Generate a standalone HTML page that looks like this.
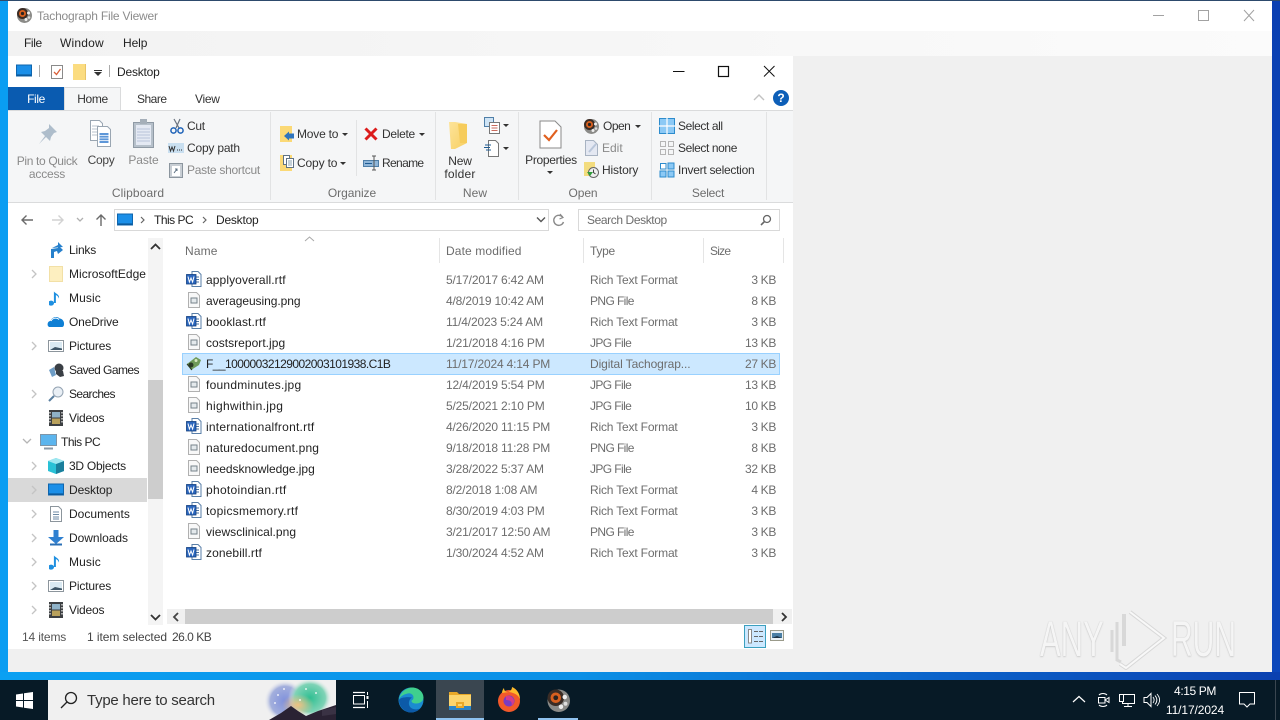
<!DOCTYPE html>
<html><head><meta charset="utf-8"><style>
html,body{margin:0;padding:0;width:1280px;height:720px;overflow:hidden;background:#f0f0f0}
body{position:relative;font-family:"Liberation Sans",sans-serif;font-size:12px;color:#222}
div,svg{position:absolute}
.t{position:absolute;white-space:nowrap;line-height:16px;height:16px;font-size:12px}
.g{color:#6d6d6d}.d{color:#8a8a8a}.c{text-align:center}
.dt{letter-spacing:-.17px}
.rt{letter-spacing:-.18px}
.pf{letter-spacing:-.6px}
.sz{letter-spacing:-.35px;text-align:right;left:700px;width:76px}
.arrow{width:0;height:0;border-left:3px solid transparent;border-right:3px solid transparent;border-top:3px solid #333}
.wm{position:absolute;height:50px;line-height:50px;font-size:50px;color:#f5f5f5;text-shadow:0 0 1px #b4b4b4,0 1px 2px #d0d0d0;transform-origin:0 0;white-space:nowrap}
</style></head><body>
<svg width="0" height="0" style="left:0;top:0"><defs>
<linearGradient id="fg" x1="0" y1="0" x2="1" y2="1"><stop offset="0" stop-color="#fde49a"/><stop offset="1" stop-color="#f7cf62"/></linearGradient>
<radialGradient id="gb"><stop offset="0" stop-color="#7f90dc"/><stop offset=".7" stop-color="#a3afdc"/><stop offset="1" stop-color="#f0f0f0" stop-opacity="0"/></radialGradient>
<radialGradient id="gg"><stop offset="0" stop-color="#2fbf92"/><stop offset=".7" stop-color="#7fd3b6"/><stop offset="1" stop-color="#f0f0f0" stop-opacity="0"/></radialGradient>
<radialGradient id="go"><stop offset="0" stop-color="#f0c080"/><stop offset="1" stop-color="#f0c080" stop-opacity="0"/></radialGradient>
<symbol id="word" viewBox="0 0 16 16"><path d="M6 .5h6l3 3v12H6z" fill="#fff" stroke="#5a7fa8"/><path d="M10 6h3M10 8.500h3M10 11h3" stroke="#4a72a0"/><rect x=".5" y="3.500" width="9.500" height="9.500" fill="#2b66bd" stroke="#123f80" stroke-width=".8"/><path d="M2 5.500l1.400 5.500 1.600-4 1.600 4L8 5.500" stroke="#fff" fill="none" stroke-width="1"/></symbol>
<symbol id="img" viewBox="0 0 16 16"><path d="M2.500 .5h8l3 3v12h-11z" fill="#f8f8f8" stroke="#b0b0b0"/><rect x="5" y="6" width="6" height="5" fill="#e4e9ec" stroke="#76828a"/></symbol>
<symbol id="mon" viewBox="0 0 16 14"><rect x=".5" y="1" width="15" height="11" fill="#1b8fe8" stroke="#0f65ad"/><path d="M1 11h14" stroke="#0a4f8a"/></symbol>
<symbol id="note" viewBox="0 0 16 16"><path d="M5 13a3 2.500 0 1 1-.1-.500V1.500c2 2.500 6 3 5 7-.6-2.500-3-3.500-3-3.500v8z" fill="#1e8fe0"/></symbol>
<symbol id="pic" viewBox="0 0 16 14"><rect x=".5" y="1.500" width="15" height="11" fill="#fff" stroke="#8c959c"/><rect x="2" y="3" width="12" height="8" fill="#d9e9f2"/><path d="M2 11l5-3 7 1.500V11z" fill="#3e5566"/></symbol>
<symbol id="film" viewBox="0 0 14 16"><rect width="14" height="16" fill="#3c3f42"/><rect x="3" y="2" width="8" height="5.500" fill="#8fb2c8"/><rect x="3" y="8.500" width="8" height="5.500" fill="#b9a15c"/><path d="M1 2v12M13 2v12" stroke="#ddd" stroke-dasharray="1.500 1.500" stroke-width="1.400"/></symbol>
<symbol id="chev" viewBox="0 0 6 10"><path d="M1 1l4 4-4 4" fill="none" stroke="#c4c4c4" stroke-width="1.300"/></symbol>
<symbol id="reel" viewBox="0 0 16 16"><circle cx="8.500" cy="8.500" r="7.500" fill="#8b8b88"/><circle cx="6.500" cy="6.500" r="5.500" fill="#3a2c25"/><circle cx="6.500" cy="6.500" r="3.500" fill="#d8601f"/><circle cx="6.500" cy="6.500" r="1.600" fill="#2a2320"/><circle cx="12.500" cy="6" r="1.500" fill="#eee"/><circle cx="10" cy="12.500" r="1.500" fill="#eee"/><circle cx="13" cy="10.500" r="1.300" fill="#ddd"/></symbol>
</defs></svg>

<!-- desktop blue edges -->
<div style="left:0;top:0;width:8px;height:680px;background:#0a9df2"></div>
<div style="left:1272px;top:0;width:8px;height:680px;background:linear-gradient(#0a3fb2,#0b47bb)"></div>
<div style="left:0;top:672px;width:1280px;height:8px;background:linear-gradient(90deg,#0aa0f2,#0a90e6 45%,#0a60c8 75%,#0a40b0)"></div>
<div style="left:0;top:0;width:1280px;height:1px;background:#2d4a6c"></div>

<!-- app title -->
<div style="left:8px;top:1px;width:1264px;height:30px;background:#fff"></div>
<svg style="left:16px;top:7px" width="16" height="16"><use href="#reel"/></svg>
<div class="t" style="left:37px;top:8px;color:#8c8c8c;letter-spacing:-.2px">Tachograph File Viewer</div>
<svg style="left:1150px;top:8px" width="110" height="16" fill="none" stroke="#a2a2a2"><path d="M3 7.500h11"/><rect x="48.500" y="2.500" width="10" height="10"/><path d="M94 2l10 11M104 2L94 13"/></svg>
<!-- menu -->
<div style="left:8px;top:31px;width:1264px;height:25px;background:linear-gradient(90deg,#f2f2f2,#fbfbfb)"></div>
<div class="t" style="left:24px;top:35px;letter-spacing:-.4px">File</div>
<div class="t" style="left:60px;top:35px;letter-spacing:.2px">Window</div>
<div class="t" style="left:123px;top:35px;letter-spacing:-.1px">Help</div>

<!-- explorer window -->
<div style="left:8px;top:56px;width:785px;height:593px;background:#fff"></div>
<svg style="left:16px;top:64px" width="16" height="14"><use href="#mon"/></svg>
<div style="left:39px;top:65px;width:1px;height:12px;background:#aaa"></div>
<svg style="left:50px;top:64px" width="14" height="16" fill="none"><path d="M1.500 1.500h11v13h-11z" fill="#fff" stroke="#8a8a8a"/><path d="M4 8l2.500 2.500L10.500 5" stroke="#d9603a" stroke-width="1.300"/></svg>
<div style="left:73px;top:64px;width:12px;height:16px;background:#fbdc80;border-right:1px solid #e8c468"></div>
<div style="left:94px;top:70px;width:8px;height:1px;background:#333"></div>
<div class="arrow" style="left:94px;top:72px;border-left-width:4px;border-right-width:4px;border-top-width:4px"></div>
<div style="left:109px;top:65px;width:1px;height:12px;background:#aaa"></div>
<div class="t" style="left:117px;top:64px;letter-spacing:-.2px">Desktop</div>
<svg style="left:670px;top:62px" width="110" height="18" fill="none" stroke="#111"><path d="M3 9.500h11.500"/><rect x="48.500" y="4.500" width="10" height="10" stroke-width="1.200"/><path d="M94 4l10.500 10.500M104.500 4L94 14.500"/></svg>

<!-- tabs -->
<div style="left:8px;top:87px;width:56px;height:23px;background:#0a5bb0"></div>
<div class="t c" style="left:8px;top:91px;width:56px;color:#fff;letter-spacing:-.4px">File</div>
<div style="left:64px;top:87px;width:57px;height:24px;background:#f5f6f7;border:1px solid #dadbdc;border-bottom:0;box-sizing:border-box"></div>
<div class="t c" style="left:64px;top:91px;width:57px;letter-spacing:-.35px;color:#333">Home</div>
<div class="t" style="left:137px;top:91px;letter-spacing:-.5px;color:#333">Share</div>
<div class="t" style="left:195px;top:91px;letter-spacing:-.3px;color:#333">View</div>
<svg style="left:752px;top:92px" width="14" height="12" fill="none"><path d="M2 8l5-5 5 5" stroke="#c2c2c2" stroke-width="1.400"/></svg>
<div style="left:773px;top:90px;width:16px;height:16px;border-radius:8px;background:#0d5fb8;color:#fff;font:bold 12px/16px 'Liberation Sans',sans-serif;text-align:center">?</div>

<!-- ribbon -->
<div style="left:8px;top:110px;width:785px;height:93px;background:#f5f6f7;border-top:1px solid #dadbdc;border-bottom:1px solid #dadbdc;box-sizing:border-box"></div>
<div style="left:270px;top:112px;width:1px;height:88px;background:#e2e3e4"></div>
<div style="left:435px;top:112px;width:1px;height:88px;background:#e2e3e4"></div>
<div style="left:518px;top:112px;width:1px;height:88px;background:#e2e3e4"></div>
<div style="left:651px;top:112px;width:1px;height:88px;background:#e2e3e4"></div>
<div style="left:766px;top:112px;width:1px;height:88px;background:#e2e3e4"></div>
<div style="left:356px;top:120px;width:1px;height:56px;background:#e2e3e4"></div>

<!-- clipboard -->
<svg style="left:36px;top:123px" width="22" height="24"><path d="M13 1l8 8-3 1-3 4-1 4-4-4-7 7 6-8-4-4 4-1 4-3z" fill="#aebdcb"/></svg>
<div class="t c d" style="left:8px;top:153px;width:78px;letter-spacing:-.35px">Pin to Quick</div>
<div class="t c d" style="left:8px;top:166px;width:78px;letter-spacing:-.2px">access</div>
<svg style="left:89px;top:120px" width="26" height="28"><path d="M1.500.5h9l3 3v17h-12z" fill="#fff" stroke="#9aa6b2"/><path d="M3 6h7M3 9h7M3 12h7M3 15h7" stroke="#b9c3cc"/><path d="M8.500 6.500h10l3 3v17h-13z" fill="#fff" stroke="#9aa6b2"/><path d="M10.500 13h9v10h-9z" fill="#5e97d8"/><path d="M10.500 15.500h9M10.500 18h9M10.500 20.500h9" stroke="#fff" stroke-width=".8"/></svg>
<div class="t c" style="left:86px;top:152px;width:30px;color:#444;letter-spacing:-.3px">Copy</div>
<svg style="left:133px;top:119px" width="22" height="30"><rect x=".5" y="3.500" width="20" height="25" fill="#b6c0ca" stroke="#8f9aa5"/><rect x="3" y="6" width="15" height="20" fill="#e4e9f3"/><path d="M4 10h13M4 13h13M4 16h13M4 19h13M4 22h13" stroke="#b7c4d9"/><rect x="7" y="0" width="7" height="5" fill="#a5afb9"/></svg>
<div class="t c d" style="left:128px;top:152px;width:31px;letter-spacing:-.1px">Paste</div>
<svg style="left:170px;top:118px" width="14" height="17" fill="none"><path d="M4 1l5 9M10 1L6 10" stroke="#6b7480" stroke-width="1.200"/><circle cx="3.500" cy="12.500" r="2.600" stroke="#1f63b8" stroke-width="1.500"/><circle cx="10.500" cy="12.500" r="2.600" stroke="#1f63b8" stroke-width="1.500"/></svg>
<div class="t" style="left:187px;top:118px;color:#333;letter-spacing:-.3px">Cut</div>
<svg style="left:168px;top:143px" width="16" height="10"><rect width="16" height="10" fill="#c9dff0"/><path d="M1 3l1.500 5 1.500-4 1.500 4L7 3" stroke="#333" fill="none"/><path d="M9 7h1M11 7h1M13 7h1" stroke="#333"/></svg>
<div class="t" style="left:187px;top:140px;letter-spacing:-.2px;color:#333">Copy path</div>
<svg style="left:169px;top:162px" width="14" height="16"><rect x=".5" y="1.500" width="13" height="14" fill="#c8ced4" stroke="#8b959e"/><rect x="3" y="4" width="8" height="10" fill="#fff"/><path d="M5 11l3-4M6 7h2v2" stroke="#5d7183" fill="none"/></svg>
<div class="t d" style="left:187px;top:162px;letter-spacing:-.27px">Paste shortcut</div>
<div class="t c g" style="left:100px;top:185px;width:76px;letter-spacing:.1px">Clipboard</div>

<!-- organize -->
<div style="left:280px;top:126px;width:12px;height:16px;background:#fbd976"></div>
<svg style="left:284px;top:131px" width="10" height="10"><path d="M5 0v2h5v5H5v2L0 4.500z" transform="translate(0 .5)" fill="#2f74bd"/></svg>
<div class="t" style="left:297px;top:126px;letter-spacing:-.2px;color:#333">Move to</div>
<div class="arrow" style="left:342px;top:133px"></div>
<div style="left:280px;top:155px;width:12px;height:16px;background:#fbd976"></div>
<svg style="left:283px;top:155px" width="11" height="13"><path d="M.5.5h6v9h-6z" fill="#fff" stroke="#5f7285"/><path d="M3.500 3.500h7v9h-7z" fill="#fff" stroke="#5f7285"/><path d="M5 6h4M5 8h4M5 10h4" stroke="#8aa0b2"/></svg>
<div class="t" style="left:297px;top:155px;letter-spacing:-.15px;color:#333">Copy to</div>
<div class="arrow" style="left:340px;top:162px"></div>
<svg style="left:364px;top:127px" width="14" height="14" fill="none"><path d="M1.500 1.500l11 11M12.500 1.500l-11 11" stroke="#dc1c1c" stroke-width="3"/></svg>
<div class="t" style="left:382px;top:126px;letter-spacing:-.3px;color:#333">Delete</div>
<div class="arrow" style="left:419px;top:133px"></div>
<svg style="left:363px;top:155px" width="17" height="16" fill="none"><rect x=".5" y="5.500" width="15" height="6" fill="#8fb6d9" stroke="#4f7fa8"/><path d="M2 8.500h7" stroke="#1e5b92"/><path d="M11 1v14M9 1h4M9 15h4" stroke="#555"/></svg>
<div class="t" style="left:382px;top:155px;letter-spacing:-.65px;color:#333">Rename</div>
<div class="t c g" style="left:320px;top:185px;width:64px;letter-spacing:-.05px">Organize</div>

<!-- new -->
<svg style="left:449px;top:121px" width="22" height="28"><path d="M0 1h6l12 2v19l-12 6H2z" fill="url(#fg)"/><path d="M9 3h9v19H11z" fill="#f6cc5c"/></svg>
<div class="t c" style="left:440px;top:153px;width:40px;color:#333;letter-spacing:-.2px">New</div>
<div class="t c" style="left:440px;top:166px;width:40px;color:#333;letter-spacing:.2px">folder</div>
<svg style="left:484px;top:117px" width="16" height="17"><rect x=".5" y=".5" width="9" height="9" fill="#cfe4f5" stroke="#4f7fa8"/><rect x="5.500" y="5.500" width="10" height="11" fill="#fff" stroke="#777"/><path d="M7.500 8.500h6M7.500 11h6M7.500 13.500h6" stroke="#c96a5c"/></svg>
<div class="arrow" style="left:503px;top:124px"></div>
<svg style="left:484px;top:140px" width="16" height="17"><path d="M4.500.5h7l3 3v13h-10z" fill="#fff" stroke="#777"/><path d="M1 5h6M0 7.500h6M2 10h5" stroke="#1e5b92"/></svg>
<div class="arrow" style="left:503px;top:147px"></div>
<div class="t c g" style="left:455px;top:185px;width:40px;letter-spacing:.1px">New</div>

<!-- open -->
<svg style="left:539px;top:120px" width="23" height="29" fill="none"><path d="M1 1h15l6 6v21H1z" fill="#fff" stroke="#8a8a8a"/><path d="M5 15l5 5 8-10" stroke="#e0601f" stroke-width="2.200"/></svg>
<div class="t c" style="left:525px;top:152px;width:52px;color:#333;letter-spacing:-.3px">Properties</div>
<div class="arrow" style="left:547px;top:171px"></div>
<svg style="left:583px;top:118px" width="16" height="16"><use href="#reel"/></svg>
<div class="t" style="left:603px;top:118px;letter-spacing:-.5px;color:#333">Open</div>
<div class="arrow" style="left:635px;top:125px"></div>
<svg style="left:585px;top:140px" width="13" height="16"><path d="M.5.500h8l4 4v11H.5z" fill="#e4e8f2" stroke="#a8b3c2"/><path d="M4 12l7-8" stroke="#b9c6da" stroke-width="2"/></svg>
<div class="t d" style="left:602px;top:140px;letter-spacing:0">Edit</div>
<div style="left:584px;top:162px;width:11px;height:14px;background:#f3dc7e"></div>
<svg style="left:587px;top:166px" width="12" height="12" fill="none"><circle cx="6.500" cy="6.500" r="5" fill="#eee" stroke="#666"/><path d="M6.500 3.500v3l2 1.500" stroke="#444"/><path d="M0 6l3 4 3-4" fill="#2e9c3a"/></svg>
<div class="t" style="left:602px;top:162px;letter-spacing:-.15px;color:#333">History</div>
<div class="t c g" style="left:565px;top:185px;width:36px;letter-spacing:-.1px">Open</div>

<!-- select -->
<svg style="left:659px;top:118px" width="16" height="16"><rect x=".5" y=".5" width="15" height="15" fill="#8cc9f5" stroke="#2d8ccd"/><path d="M8 0v16M0 8h16" stroke="#fff" stroke-width="1.200"/></svg>
<div class="t" style="left:678px;top:118px;letter-spacing:-.4px;color:#333">Select all</div>
<svg style="left:659px;top:140px" width="16" height="16" fill="none" stroke="#b5b5b5"><rect x="1.500" y="1.500" width="5" height="5"/><rect x="9.500" y="1.500" width="5" height="5"/><rect x="1.500" y="9.500" width="5" height="5"/><rect x="9.500" y="9.500" width="5" height="5"/></svg>
<div class="t" style="left:678px;top:140px;letter-spacing:-.4px;color:#333">Select none</div>
<svg style="left:659px;top:162px" width="16" height="16" stroke="#2d8ccd"><rect x="1.500" y="1.500" width="5.500" height="5.500" fill="#fff"/><rect x="9" y="1" width="6" height="6" fill="#8cc9f5"/><rect x="1" y="9" width="6" height="6" fill="#8cc9f5"/><rect x="9" y="9" width="6" height="6" fill="#8cc9f5"/></svg>
<div class="t" style="left:678px;top:162px;letter-spacing:-.27px;color:#333">Invert selection</div>
<div class="t c g" style="left:688px;top:185px;width:40px;letter-spacing:-.2px">Select</div>

<!-- nav bar -->
<svg style="left:20px;top:213px" width="92" height="14" fill="none"><path d="M13 7H2M6.500 2.500L2 7l4.500 4.500" stroke="#6a6a6a" stroke-width="1.400"/><path d="M43 7h-11M38.500 2.500L43 7l-4.500 4.500" stroke="#d2d2d2" stroke-width="1.400"/><path d="M57 5l3 3 3-3" stroke="#b0b0b0" stroke-width="1.300"/><path d="M81 13V2M76.500 6.500L81 2l4.500 4.500" stroke="#6a6a6a" stroke-width="1.400"/></svg>
<div style="left:114px;top:209px;width:435px;height:22px;border:1px solid #d9d9d9;box-sizing:border-box"></div>
<svg style="left:117px;top:213px" width="16" height="14"><use href="#mon"/></svg>
<svg style="left:140px;top:216px" width="6" height="8" fill="none"><path d="M1 1l3 3-3 3" stroke="#666" stroke-width="1.200"/></svg>
<div class="t" style="left:154px;top:212px;letter-spacing:-.5px">This PC</div>
<svg style="left:202px;top:216px" width="6" height="8" fill="none"><path d="M1 1l3 3-3 3" stroke="#666" stroke-width="1.200"/></svg>
<div class="t" style="left:216px;top:212px;letter-spacing:-.22px">Desktop</div>
<svg style="left:536px;top:216px" width="10" height="8" fill="none"><path d="M1 1.500l4 4 4-4" stroke="#555" stroke-width="1.400"/></svg>
<div style="left:548px;top:209px;width:1px;height:22px;background:#d9d9d9"></div>
<svg style="left:552px;top:213px" width="13" height="14" fill="none"><path d="M10.500 4A5 5 0 1 0 11.500 9" stroke="#8a8a8a" stroke-width="1.400"/><path d="M8 1l3 3.500L7.500 6" stroke="#8a8a8a" stroke-width="1.200"/></svg>
<div style="left:578px;top:209px;width:202px;height:22px;border:1px solid #d9d9d9;box-sizing:border-box"></div>
<div class="t g" style="left:587px;top:212px;letter-spacing:-.4px">Search Desktop</div>
<svg style="left:760px;top:214px" width="12" height="12" fill="none"><circle cx="7" cy="5" r="3.500" stroke="#666" stroke-width="1.300"/><path d="M4.500 7.500L1 11" stroke="#666" stroke-width="1.600"/></svg>

<!-- sidebar -->
<div style="left:8px;top:478px;width:139px;height:24px;background:#d9d9d9"></div>
<svg style="left:48px;top:241px" width="16" height="18"><path d="M3 17V8l7-1V4l5 5-5 4-1-3-3 1v6z" fill="#2680cc"/><path d="M4 7l6-3V1l5 5" fill="#2680cc"/></svg>
<div class="t" style="left:69px;top:242px;letter-spacing:-.2px">Links</div>
<svg style="left:31px;top:269px" width="6" height="10"><use href="#chev"/></svg>
<div style="left:49px;top:266px;width:14px;height:16px;background:#fdefc0;border:1px solid #f2e0a6;box-sizing:border-box"></div>
<div class="t" style="left:69px;top:266px;letter-spacing:.02px">MicrosoftEdge</div>
<svg style="left:49px;top:290px" width="16" height="16"><use href="#note"/></svg>
<div class="t" style="left:69px;top:290px;letter-spacing:.1px">Music</div>
<svg style="left:47px;top:315px" width="18" height="13"><path d="M1 11c-1-2 0-5 2.500-5 1-3.500 6.500-5.500 9-2.500 2.500 0 5 2.500 4.500 6 0 1.500-1 2.500-2 2.500H2z" fill="#0f7fd4"/><path d="M4 6C6 2.500 10 2.500 12 4.500" stroke="#fff" fill="none"/></svg>
<div class="t" style="left:69px;top:314px;letter-spacing:-.15px">OneDrive</div>
<svg style="left:31px;top:341px" width="6" height="10"><use href="#chev"/></svg>
<svg style="left:48px;top:339px" width="16" height="14"><use href="#pic"/></svg>
<div class="t" style="left:69px;top:338px;letter-spacing:-.15px">Pictures</div>
<svg style="left:48px;top:362px" width="17" height="16"><circle cx="11" cy="6" r="4.500" fill="#3a3f45"/><path d="M8 9l7 0 1 5-4 1-4-3z" fill="#3a3f45"/><path d="M1 8l5-3 2 8-4 2z" fill="#6d9cc5"/></svg>
<div class="t" style="left:69px;top:362px;letter-spacing:-.55px">Saved Games</div>
<svg style="left:31px;top:389px" width="6" height="10"><use href="#chev"/></svg>
<svg style="left:48px;top:386px" width="16" height="16" fill="none"><circle cx="10" cy="6" r="5" fill="#e9eff5" stroke="#94a3b2"/><path d="M6 10l-5 5" stroke="#5a7fa0" stroke-width="2"/></svg>
<div class="t" style="left:69px;top:386px;letter-spacing:-.6px">Searches</div>
<svg style="left:49px;top:410px" width="14" height="16"><use href="#film"/></svg>
<div class="t" style="left:69px;top:410px;letter-spacing:-.2px">Videos</div>
<svg style="left:22px;top:438px" width="10" height="6" fill="none"><path d="M1 1l4 4 4-4" stroke="#b5b5b5" stroke-width="1.300"/></svg>
<svg style="left:40px;top:434px" width="17" height="16"><rect x=".5" y=".5" width="16" height="11" fill="#5cb5ee" stroke="#7e95a8"/><path d="M4 14.500h9" stroke="#8a9aa8" stroke-width="2"/></svg>
<div class="t" style="left:61px;top:434px;letter-spacing:-.5px">This PC</div>
<svg style="left:31px;top:461px" width="6" height="10"><use href="#chev"/></svg>
<svg style="left:48px;top:458px" width="16" height="16"><path d="M8 0l8 3v10l-8 3-8-3V3z" fill="#29c1d6"/><path d="M8 6l8-3v10l-8 3z" fill="#1a7f9c"/><path d="M0 3l8-3 8 3-8 3z" fill="#9fe7f0"/></svg>
<div class="t" style="left:69px;top:458px;letter-spacing:-.25px">3D Objects</div>
<svg style="left:31px;top:485px" width="6" height="10"><use href="#chev"/></svg>
<svg style="left:48px;top:483px" width="16" height="14"><use href="#mon"/></svg>
<div class="t" style="left:69px;top:482px;letter-spacing:-.1px">Desktop</div>
<svg style="left:31px;top:509px" width="6" height="10"><use href="#chev"/></svg>
<svg style="left:50px;top:506px" width="12" height="16"><path d="M.5.500h8l3 3v12H.5z" fill="#fff" stroke="#8c959c"/><path d="M3 6h6M3 8.500h6M3 11h6M3 13h6" stroke="#6d8aa5"/></svg>
<div class="t" style="left:69px;top:506px;letter-spacing:.02px">Documents</div>
<svg style="left:31px;top:533px" width="6" height="10"><use href="#chev"/></svg>
<svg style="left:48px;top:530px" width="16" height="16"><path d="M5.500 0h5v7H16l-8 7-8-7h5.500z" fill="#2f80d0"/><path d="M2 14.500h12" stroke="#2a6fb5" stroke-width="2"/></svg>
<div class="t" style="left:69px;top:530px;letter-spacing:-.05px">Downloads</div>
<svg style="left:31px;top:557px" width="6" height="10"><use href="#chev"/></svg>
<svg style="left:49px;top:554px" width="16" height="16"><use href="#note"/></svg>
<div class="t" style="left:69px;top:554px;letter-spacing:.1px">Music</div>
<svg style="left:31px;top:581px" width="6" height="10"><use href="#chev"/></svg>
<svg style="left:48px;top:579px" width="16" height="14"><use href="#pic"/></svg>
<div class="t" style="left:69px;top:578px;letter-spacing:-.15px">Pictures</div>
<svg style="left:31px;top:605px" width="6" height="10"><use href="#chev"/></svg>
<svg style="left:49px;top:602px" width="14" height="16"><use href="#film"/></svg>
<div class="t" style="left:69px;top:602px;letter-spacing:-.2px">Videos</div>

<!-- sidebar scrollbar -->
<div style="left:148px;top:238px;width:15px;height:387px;background:#f4f4f4"></div>
<div style="left:148px;top:380px;width:15px;height:119px;background:#cdcdcd"></div>
<svg style="left:150px;top:243px" width="11" height="8" fill="none"><path d="M1 6l4.500-4.500L10 6" stroke="#333" stroke-width="1.800"/></svg>
<svg style="left:150px;top:613px" width="11" height="8" fill="none"><path d="M1 2l4.500 4.500L10 2" stroke="#333" stroke-width="1.800"/></svg>

<!-- column headers -->
<svg style="left:304px;top:236px" width="11" height="6" fill="none"><path d="M1 5l4.500-4L10 5" stroke="#a8a8a8"/></svg>
<div class="t g" style="left:185px;top:243px;letter-spacing:.15px">Name</div>
<div style="left:439px;top:238px;width:1px;height:25px;background:#e5e5e5"></div>
<div class="t g" style="left:446px;top:243px;letter-spacing:.12px">Date modified</div>
<div style="left:583px;top:238px;width:1px;height:25px;background:#e5e5e5"></div>
<div class="t g" style="left:590px;top:243px;letter-spacing:-.3px">Type</div>
<div style="left:703px;top:238px;width:1px;height:25px;background:#e5e5e5"></div>
<div class="t g" style="left:710px;top:243px;letter-spacing:-.75px">Size</div>
<div style="left:783px;top:238px;width:1px;height:25px;background:#e5e5e5"></div>

<!-- selected row -->
<div style="left:182px;top:353px;width:598px;height:22px;background:#cce8ff;border:1px solid #99d1ff;box-sizing:border-box"></div>

<!-- rows -->
<svg style="left:186px;top:271px" width="16" height="16"><use href="#word"/></svg>
<div class="t" style="left:206px;top:272px;letter-spacing:.1px">applyoverall.rtf</div>
<div class="t g dt" style="left:446px;top:272px">5/17/2017 6:42 AM</div>
<div class="t g rt" style="left:590px;top:272px">Rich Text Format</div>
<div class="t g sz" style="top:272px">3 KB</div>

<svg style="left:186px;top:292px" width="16" height="16"><use href="#img"/></svg>
<div class="t" style="left:206px;top:293px;letter-spacing:-.06px">averageusing.png</div>
<div class="t g dt" style="left:446px;top:293px">4/8/2019 10:42 AM</div>
<div class="t g pf" style="left:590px;top:293px">PNG File</div>
<div class="t g sz" style="top:293px">8 KB</div>

<svg style="left:186px;top:313px" width="16" height="16"><use href="#word"/></svg>
<div class="t" style="left:206px;top:314px;letter-spacing:.1px">booklast.rtf</div>
<div class="t g dt" style="left:446px;top:314px">11/4/2023 5:24 AM</div>
<div class="t g rt" style="left:590px;top:314px">Rich Text Format</div>
<div class="t g sz" style="top:314px">3 KB</div>

<svg style="left:186px;top:334px" width="16" height="16"><use href="#img"/></svg>
<div class="t" style="left:206px;top:335px;letter-spacing:.03px">costsreport.jpg</div>
<div class="t g dt" style="left:446px;top:335px">1/21/2018 4:16 PM</div>
<div class="t g pf" style="left:590px;top:335px">JPG File</div>
<div class="t g sz" style="top:335px">13 KB</div>

<svg style="left:186px;top:356px" width="16" height="15"><path d="M1 8l9-7 5 3-2 5-8 5z" fill="#6f9a58"/><path d="M1 8l5 6" stroke="#2f3d28"/><circle cx="5" cy="9" r="2.500" fill="#2b3a24"/><circle cx="10" cy="4.500" r="1.500" fill="#d8e8c0"/></svg>
<div class="t" style="left:206px;top:356px;letter-spacing:-.55px">F__10000032129002003101938.C1B</div>
<div class="t g dt" style="left:446px;top:356px">11/17/2024 4:14 PM</div>
<div class="t g" style="left:590px;top:356px;letter-spacing:-.1px">Digital Tachograp...</div>
<div class="t g sz" style="top:356px">27 KB</div>

<svg style="left:186px;top:376px" width="16" height="16"><use href="#img"/></svg>
<div class="t" style="left:206px;top:377px;letter-spacing:.25px">foundminutes.jpg</div>
<div class="t g dt" style="left:446px;top:377px">12/4/2019 5:54 PM</div>
<div class="t g pf" style="left:590px;top:377px">JPG File</div>
<div class="t g sz" style="top:377px">13 KB</div>

<svg style="left:186px;top:397px" width="16" height="16"><use href="#img"/></svg>
<div class="t" style="left:206px;top:398px;letter-spacing:.32px">highwithin.jpg</div>
<div class="t g dt" style="left:446px;top:398px">5/25/2021 2:10 PM</div>
<div class="t g pf" style="left:590px;top:398px">JPG File</div>
<div class="t g sz" style="top:398px">10 KB</div>

<svg style="left:186px;top:418px" width="16" height="16"><use href="#word"/></svg>
<div class="t" style="left:206px;top:419px;letter-spacing:.23px">internationalfront.rtf</div>
<div class="t g dt" style="left:446px;top:419px">4/26/2020 11:15 PM</div>
<div class="t g rt" style="left:590px;top:419px">Rich Text Format</div>
<div class="t g sz" style="top:419px">3 KB</div>

<svg style="left:186px;top:439px" width="16" height="16"><use href="#img"/></svg>
<div class="t" style="left:206px;top:440px;letter-spacing:.17px">naturedocument.png</div>
<div class="t g dt" style="left:446px;top:440px">9/18/2018 11:28 PM</div>
<div class="t g pf" style="left:590px;top:440px">PNG File</div>
<div class="t g sz" style="top:440px">8 KB</div>

<svg style="left:186px;top:460px" width="16" height="16"><use href="#img"/></svg>
<div class="t" style="left:206px;top:461px;letter-spacing:-.04px">needsknowledge.jpg</div>
<div class="t g dt" style="left:446px;top:461px">3/28/2022 5:37 AM</div>
<div class="t g pf" style="left:590px;top:461px">JPG File</div>
<div class="t g sz" style="top:461px">32 KB</div>

<svg style="left:186px;top:481px" width="16" height="16"><use href="#word"/></svg>
<div class="t" style="left:206px;top:482px;letter-spacing:.3px">photoindian.rtf</div>
<div class="t g dt" style="left:446px;top:482px">8/2/2018 1:08 AM</div>
<div class="t g rt" style="left:590px;top:482px">Rich Text Format</div>
<div class="t g sz" style="top:482px">4 KB</div>

<svg style="left:186px;top:502px" width="16" height="16"><use href="#word"/></svg>
<div class="t" style="left:206px;top:503px;letter-spacing:.28px">topicsmemory.rtf</div>
<div class="t g dt" style="left:446px;top:503px">8/30/2019 4:03 PM</div>
<div class="t g rt" style="left:590px;top:503px">Rich Text Format</div>
<div class="t g sz" style="top:503px">3 KB</div>

<svg style="left:186px;top:523px" width="16" height="16"><use href="#img"/></svg>
<div class="t" style="left:206px;top:524px;letter-spacing:.04px">viewsclinical.png</div>
<div class="t g dt" style="left:446px;top:524px">3/21/2017 12:50 AM</div>
<div class="t g pf" style="left:590px;top:524px">PNG File</div>
<div class="t g sz" style="top:524px">3 KB</div>

<svg style="left:186px;top:544px" width="16" height="16"><use href="#word"/></svg>
<div class="t" style="left:206px;top:545px;letter-spacing:.1px">zonebill.rtf</div>
<div class="t g dt" style="left:446px;top:545px">1/30/2024 4:52 AM</div>
<div class="t g rt" style="left:590px;top:545px">Rich Text Format</div>
<div class="t g sz" style="top:545px">3 KB</div>

<!-- h scrollbar -->
<div style="left:167px;top:609px;width:625px;height:15px;background:#f0f0f0"></div>
<div style="left:185px;top:609px;width:588px;height:15px;background:#cdcdcd"></div>
<svg style="left:172px;top:612px" width="8" height="10" fill="none"><path d="M6 1L2 5l4 4" stroke="#444" stroke-width="1.800"/></svg>
<svg style="left:780px;top:612px" width="8" height="10" fill="none"><path d="M2 1l4 4-4 4" stroke="#333" stroke-width="1.800"/></svg>

<!-- status -->
<div class="t" style="left:22px;top:629px;color:#555;letter-spacing:-.15px">14 items</div>
<div class="t" style="left:87px;top:629px;color:#444;letter-spacing:-.05px">1 item selected</div>
<div class="t" style="left:172px;top:629px;color:#444;letter-spacing:-.5px">26.0 KB</div>
<div style="left:744px;top:625px;width:22px;height:23px;background:#cce8ff;border:1px solid #3ba0bf;box-sizing:border-box"></div>
<svg style="left:748px;top:629px" width="16" height="15" fill="none"><rect x=".5" y=".5" width="3" height="13.500" fill="#fff" stroke="#888"/><path d="M6 2.500h4M11 2.500h4M6 7.500h4M11 7.500h4M6 12.500h4M11 12.500h4" stroke="#666"/></svg>
<svg style="left:770px;top:630px" width="14" height="11"><rect x=".5" y=".5" width="13" height="10" fill="#e8f0f5" stroke="#9a9a8a"/><path d="M2 3h10v5H2z" fill="#4a7fa5"/><path d="M2 8l5-2 5 2z" fill="#1e3345"/></svg>

<!-- watermark -->
<div class="wm" style="left:1040px;top:614px;transform:scaleX(.62)">ANY</div>
<div class="wm" style="left:1171px;top:614px;transform:scaleX(.6)">RUN</div>
<svg style="left:1108px;top:606px" width="60" height="64" fill="none"><path d="M4 24v22M9 16v38l4 2" stroke="#d8d8d8" stroke-width="3"/><path d="M16 8v32M22 6l34 26-38 30-6-4" stroke="#d8d8d8" stroke-width="4"/><path d="M22 6l34 26-38 30-6-4" stroke="#f8f8f8" stroke-width="2"/></svg>

<!-- taskbar -->
<div style="left:0;top:680px;width:1280px;height:40px;background:#071a26"></div>
<svg style="left:16px;top:692px" width="17" height="17" fill="#fff"><path d="M0 2.500l7-1v6.500H0zM8 1.300L17 0v8H8zM0 9h7v6.500l-7-1zM8 9h9v8l-9-1.300z"/></svg>
<div style="left:48px;top:680px;width:288px;height:40px;background:#f0f0f0"></div>
<svg style="left:60px;top:691px" width="18" height="18" fill="none" stroke="#222" stroke-width="1.300"><circle cx="11" cy="7" r="5.500"/><path d="M7 11l-6 6"/></svg>
<div class="t" style="left:87px;top:691px;font-size:15px;line-height:20px;height:20px;color:#333;letter-spacing:-.25px">Type here to search</div>
<svg style="left:264px;top:680px" width="72" height="40"><ellipse cx="21" cy="21" rx="21" ry="21" fill="url(#gb)"/><ellipse cx="46" cy="18" rx="22" ry="20" fill="url(#gg)"/><ellipse cx="34" cy="25" rx="16" ry="11" fill="url(#go)"/><g fill="#fff" opacity=".8"><circle cx="14" cy="15" r="1"/><circle cx="20" cy="9" r="1"/><circle cx="11" cy="23" r="1"/><circle cx="42" cy="9" r="1"/><circle cx="52" cy="13" r="1"/><circle cx="36" cy="20" r="1"/></g><path d="M5 40l12-7 10-7 7 5 8 5 12-5 18-6v15z" fill="#2a2233"/><path d="M58 30l14-3v7l-14 2z" fill="#3a3244"/></svg>
<svg style="left:351px;top:691px" width="18" height="18" fill="none" stroke="#fff"><rect x="2.500" y="4.500" width="11" height="8.500"/><path d="M2 1.500h12M2 16.500h12" stroke-width="1.300"/><rect x="15.500" y="5" width="2" height="3" fill="#fff" stroke="none"/><path d="M16.500 1v3M16.500 10v7"/></svg>
<svg style="left:398px;top:687px" width="26" height="26"><circle cx="13" cy="13" r="12.500" fill="#1b8bd0"/><path d="M1 13C2 4 10 .5 14 .5c7 0 11.500 5 11.500 10 0 4-4 6-7 6-3 0-5-1-5-2.500 0-1 2-1 2-3.500 0-3-3-5-6-4C5 7.500 1.500 10 1 13z" fill="#3fcf8e"/><path d="M1 13c0 7 6 12.500 12 12.500 4 0 7-2 9-4-5 2-10 .5-11-4-.5-3 1-6 3-7-5-1-12 0-13 2.500z" fill="#0c5aa8"/></svg>
<div style="left:436px;top:680px;width:48px;height:40px;background:#3a4650"></div>
<div style="left:436px;top:718px;width:48px;height:2px;background:#8fc2ee"></div>
<svg style="left:449px;top:690px" width="22" height="20"><path d="M0 2h8l2 2h12v3H0z" fill="#e8a828"/><rect y="5" width="22" height="15" fill="#fbd56e"/><rect y="16" width="22" height="4" fill="#2b86c8"/><rect x="7" y="12" width="8" height="6" fill="#e8a828"/><rect x="9" y="14" width="4" height="2" fill="#fbd56e"/></svg>
<svg style="left:497px;top:687px" width="24" height="25"><circle cx="12" cy="14" r="11" fill="#f2592a"/><path d="M5 6c0-2 1-4 2-5 0 3 2 4 4 4 3-1 4-3 4-5 5 2 8 7 8 12-2-4-5-6-11-7z" fill="#fdb92b"/><circle cx="12" cy="14" r="5.500" fill="#7a3cc2"/><path d="M9 9c3-1 8 1 8 5 0 2-1 4-3 5 2-3 0-6-5-6z" fill="#d43c8c"/></svg>
<svg style="left:546px;top:688px" width="24" height="24"><use href="#reel"/></svg>
<div style="left:538px;top:718px;width:40px;height:2px;background:#8fc2ee"></div>
<div style="left:1275px;top:680px;width:1px;height:40px;background:#3a4650"></div>

<!-- tray -->
<svg style="left:1072px;top:695px" width="14" height="9" fill="none"><path d="M1 7l6-5.500L13 7" stroke="#fff" stroke-width="1.200"/></svg>
<svg style="left:1097px;top:692px" width="14" height="16" fill="none" stroke="#fff"><path d="M2 3c2-2 6-2 8 0M2 13c2 2 6 2 8 0"/><rect x="1.500" y="5.500" width="6.500" height="5.500"/><path d="M8 8l4-2.500v5z"/></svg>
<svg style="left:1119px;top:693px" width="16" height="15" fill="none" stroke="#fff"><rect x="3.500" y="1.500" width="12" height="9"/><rect x=".5" y="1.500" width="4" height="7" fill="#071a26"/><path d="M9 10.500v3M5 13.500h8"/></svg>
<svg style="left:1143px;top:692px" width="17" height="16" fill="none" stroke="#fff"><path d="M1 5.500h3l4-4v13l-4-4H1z"/><path d="M10 5c1.500 2 1.500 4 0 6M12 3.500c2.500 3 2.500 6 0 9M14 2c3.500 4 3.500 8 0 12" stroke-width=".9"/></svg>
<div class="t c" style="left:1165px;top:682px;width:60px;height:18px;line-height:18px;color:#fff;letter-spacing:-.4px">4:15 PM</div>
<div class="t c" style="left:1165px;top:701px;width:60px;height:18px;line-height:18px;color:#fff;letter-spacing:-.1px">11/17/2024</div>
<svg style="left:1239px;top:692px" width="17" height="16" fill="none" stroke="#fff"><path d="M.5.500h15v11.500h-4.500L8 15l-3-3H.5z"/></svg>
</body></html>
